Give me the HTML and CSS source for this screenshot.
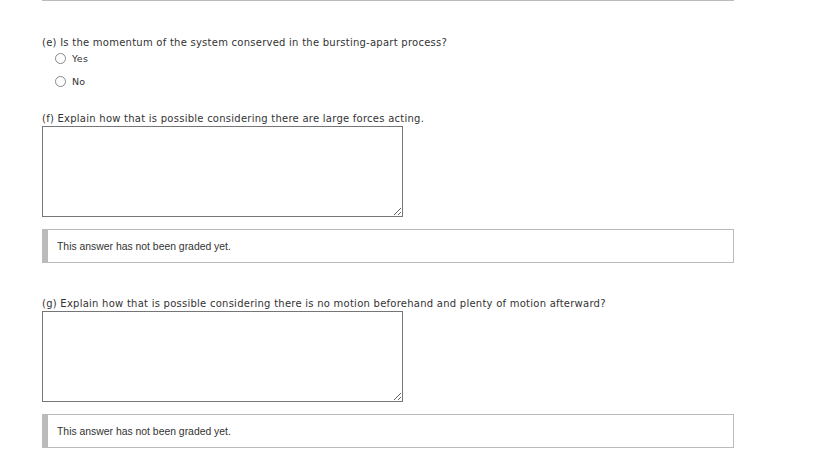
FILE: index.html
```html
<!DOCTYPE html>
<html>
<head>
<meta charset="utf-8">
<link rel="stylesheet" href="styles.css">
</head>
<body>
<div class="page">
  <hr class="rule">
  <div class="q q-e">
    <p class="prompt">(e) Is the momentum of the system conserved in the bursting-apart process?</p>
    <label class="opt opt-yes"><span class="radio"></span>Yes</label>
    <label class="opt opt-no"><span class="radio"></span>No</label>
  </div>
  <div class="q q-f">
    <p class="prompt">(f) Explain how that is possible considering there are large forces acting.</p>
    <textarea class="answer"></textarea>
    <div class="graded">This answer has not been graded yet.</div>
  </div>
  <div class="q q-g">
    <p class="prompt">(g) Explain how that is possible considering there is no motion beforehand and plenty of motion afterward?</p>
    <textarea class="answer"></textarea>
    <div class="graded">This answer has not been graded yet.</div>
  </div>
</div>
</body>
</html>
```

FILE: styles.css
```css
html, body {
  margin: 0;
  padding: 0;
  background: #fff;
}
.page {
  width: 692px;
  margin-left: 42px;
  font-family: "DejaVu Sans", Verdana, sans-serif;
  font-size: 10px;
  letter-spacing: 0.25px;
  color: #333;
}
.rule {
  margin: 0;
  border: 0;
  border-top: 1px solid #bbb;
  height: 0;
}
.prompt {
  margin: 0;
  line-height: 12px;
  white-space: nowrap;
}
.q-e {
  padding-top: 36px;
}
.opt {
  display: flex;
  align-items: center;
  margin-left: 13px;
  height: 12px;
  font-size: 9.5px;
}
.opt-yes { margin-top: 3px; }
.opt-no { margin-top: 11px; }
.radio {
  width: 9px;
  height: 9px;
  border: 1px solid #888;
  border-radius: 50%;
  margin-right: 6px;
  background: #fff;
}
.q-f {
  padding-top: 26px;
}
.q-g {
  padding-top: 35px;
}
.answer {
  display: block;
  box-sizing: border-box;
  width: 361px;
  height: 91px;
  margin: 1px 0 0 0;
  border: 1px solid #767676;
  padding: 2px;
  resize: both;
}
.graded {
  box-sizing: border-box;
  margin-top: 12px;
  height: 34px;
  border: 1px solid #bbb;
  border-left: 6px solid #bbb;
  padding-left: 9px;
  display: flex;
  align-items: center;
  font-family: "Liberation Sans", Arial, sans-serif;
  font-size: 10.4px;
  letter-spacing: 0;
  color: #333;
}
```
